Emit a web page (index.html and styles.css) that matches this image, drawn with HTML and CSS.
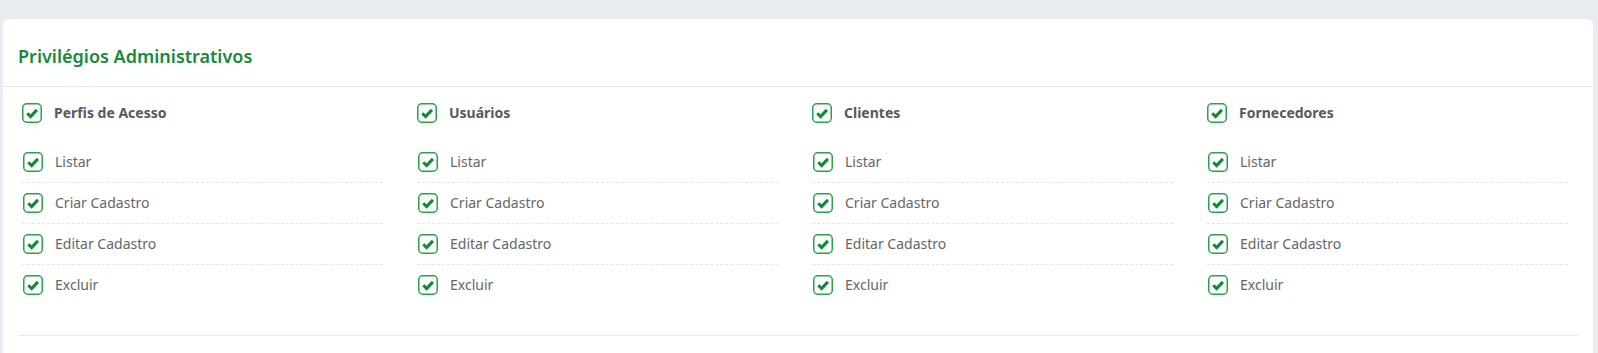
FILE: index.html
```html
<!DOCTYPE html>
<html lang="pt-BR">
<head>
    <meta charset="UTF-8">
    <meta name="viewport" content="width=device-width, initial-scale=1.0">
    <title>Privilégios Administrativos</title>
    <link rel="stylesheet" href="styles.css">
</head>
<body>
    <div class="card">
        <!-- Cabeçalho -->
        <div class="card-header">
            <h2>Privilégios Administrativos</h2>
        </div>

        <div class="card-body">
            <div class="perm-grid">
                <div class="perm-group">
                    <label class="perm-head">
                        <svg class="check" viewBox="0 0 20 20"><rect x="0.75" y="0.75" width="18.5" height="18.5" rx="4"/><path d="M5.3 10.3 L8.6 13.6 L14.9 6.9"/></svg>
                        Perfis de Acesso
                    </label>
                    <ul class="perm-list">
                        <li><svg class="check" viewBox="0 0 20 20"><rect x="0.75" y="0.75" width="18.5" height="18.5" rx="4"/><path d="M5.3 10.3 L8.6 13.6 L14.9 6.9"/></svg>Listar</li>
                        <li><svg class="check" viewBox="0 0 20 20"><rect x="0.75" y="0.75" width="18.5" height="18.5" rx="4"/><path d="M5.3 10.3 L8.6 13.6 L14.9 6.9"/></svg>Criar Cadastro</li>
                        <li><svg class="check" viewBox="0 0 20 20"><rect x="0.75" y="0.75" width="18.5" height="18.5" rx="4"/><path d="M5.3 10.3 L8.6 13.6 L14.9 6.9"/></svg>Editar Cadastro</li>
                        <li><svg class="check" viewBox="0 0 20 20"><rect x="0.75" y="0.75" width="18.5" height="18.5" rx="4"/><path d="M5.3 10.3 L8.6 13.6 L14.9 6.9"/></svg>Excluir</li>
                    </ul>
                </div>

                <div class="perm-group">
                    <label class="perm-head">
                        <svg class="check" viewBox="0 0 20 20"><rect x="0.75" y="0.75" width="18.5" height="18.5" rx="4"/><path d="M5.3 10.3 L8.6 13.6 L14.9 6.9"/></svg>
                        Usuários
                    </label>
                    <ul class="perm-list">
                        <li><svg class="check" viewBox="0 0 20 20"><rect x="0.75" y="0.75" width="18.5" height="18.5" rx="4"/><path d="M5.3 10.3 L8.6 13.6 L14.9 6.9"/></svg>Listar</li>
                        <li><svg class="check" viewBox="0 0 20 20"><rect x="0.75" y="0.75" width="18.5" height="18.5" rx="4"/><path d="M5.3 10.3 L8.6 13.6 L14.9 6.9"/></svg>Criar Cadastro</li>
                        <li><svg class="check" viewBox="0 0 20 20"><rect x="0.75" y="0.75" width="18.5" height="18.5" rx="4"/><path d="M5.3 10.3 L8.6 13.6 L14.9 6.9"/></svg>Editar Cadastro</li>
                        <li><svg class="check" viewBox="0 0 20 20"><rect x="0.75" y="0.75" width="18.5" height="18.5" rx="4"/><path d="M5.3 10.3 L8.6 13.6 L14.9 6.9"/></svg>Excluir</li>
                    </ul>
                </div>

                <div class="perm-group">
                    <label class="perm-head">
                        <svg class="check" viewBox="0 0 20 20"><rect x="0.75" y="0.75" width="18.5" height="18.5" rx="4"/><path d="M5.3 10.3 L8.6 13.6 L14.9 6.9"/></svg>
                        Clientes
                    </label>
                    <ul class="perm-list">
                        <li><svg class="check" viewBox="0 0 20 20"><rect x="0.75" y="0.75" width="18.5" height="18.5" rx="4"/><path d="M5.3 10.3 L8.6 13.6 L14.9 6.9"/></svg>Listar</li>
                        <li><svg class="check" viewBox="0 0 20 20"><rect x="0.75" y="0.75" width="18.5" height="18.5" rx="4"/><path d="M5.3 10.3 L8.6 13.6 L14.9 6.9"/></svg>Criar Cadastro</li>
                        <li><svg class="check" viewBox="0 0 20 20"><rect x="0.75" y="0.75" width="18.5" height="18.5" rx="4"/><path d="M5.3 10.3 L8.6 13.6 L14.9 6.9"/></svg>Editar Cadastro</li>
                        <li><svg class="check" viewBox="0 0 20 20"><rect x="0.75" y="0.75" width="18.5" height="18.5" rx="4"/><path d="M5.3 10.3 L8.6 13.6 L14.9 6.9"/></svg>Excluir</li>
                    </ul>
                </div>

                <div class="perm-group">
                    <label class="perm-head">
                        <svg class="check" viewBox="0 0 20 20"><rect x="0.75" y="0.75" width="18.5" height="18.5" rx="4"/><path d="M5.3 10.3 L8.6 13.6 L14.9 6.9"/></svg>
                        Fornecedores
                    </label>
                    <ul class="perm-list">
                        <li><svg class="check" viewBox="0 0 20 20"><rect x="0.75" y="0.75" width="18.5" height="18.5" rx="4"/><path d="M5.3 10.3 L8.6 13.6 L14.9 6.9"/></svg>Listar</li>
                        <li><svg class="check" viewBox="0 0 20 20"><rect x="0.75" y="0.75" width="18.5" height="18.5" rx="4"/><path d="M5.3 10.3 L8.6 13.6 L14.9 6.9"/></svg>Criar Cadastro</li>
                        <li><svg class="check" viewBox="0 0 20 20"><rect x="0.75" y="0.75" width="18.5" height="18.5" rx="4"/><path d="M5.3 10.3 L8.6 13.6 L14.9 6.9"/></svg>Editar Cadastro</li>
                        <li><svg class="check" viewBox="0 0 20 20"><rect x="0.75" y="0.75" width="18.5" height="18.5" rx="4"/><path d="M5.3 10.3 L8.6 13.6 L14.9 6.9"/></svg>Excluir</li>
                    </ul>
                </div>
            </div>

            <hr class="divider">
        </div>
    </div>
</body>
</html>
```

FILE: styles.css
```css
/* Estilos da página */
body {
    font-family: "Noto Sans", "Open Sans", sans-serif;
    background-color: #e9ecf1;
    margin: 0;
    padding: 19px 5px 0 3px;
    height: 100vh;
    box-sizing: border-box;
    overflow: hidden;
}

.card {
    background-color: #fff;
    border-radius: 6px;
    min-height: 400px;
}

.card-header {
    padding: 22px 15px 15px;
    border-bottom: 1px solid #e6e8eb;
}

.card-header h2 {
    margin: 0;
    font-size: 18px;
    line-height: 30px;
    font-weight: 600;
    color: #178a3a;
}

.card-body {
    padding: 6px 15px 0;
}

.perm-grid {
    display: grid;
    grid-template-columns: repeat(4, 1fr);
    column-gap: 34px;
    padding: 0 10px 0 4px;
}

.perm-head {
    display: flex;
    align-items: center;
    gap: 12px;
    padding: 10px 0;
    font-size: 14px;
    line-height: 20px;
    font-weight: 700;
    color: #58595c;
}

.perm-list {
    list-style: none;
    margin: 9px 0 0;
    padding: 0;
}

.perm-list li {
    display: flex;
    align-items: center;
    gap: 12px;
    padding: 10px 0 10px 1px;
    border-bottom: 1px dashed #e4e4e4;
    font-size: 14px;
    line-height: 20px;
    color: #666;
}

.perm-list li:last-child {
    border-bottom: none;
}

.check {
    width: 20px;
    height: 20px;
    flex-shrink: 0;
}

.check rect {
    fill: #fff;
    stroke: #2aa14e;
    stroke-width: 1.5;
}

.check path {
    fill: none;
    stroke: #0d8a34;
    stroke-width: 3;
    stroke-linejoin: miter;
}

.divider {
    margin: 30px 0 0;
    border: none;
    border-top: 1px solid #e6e8eb;
}
```
